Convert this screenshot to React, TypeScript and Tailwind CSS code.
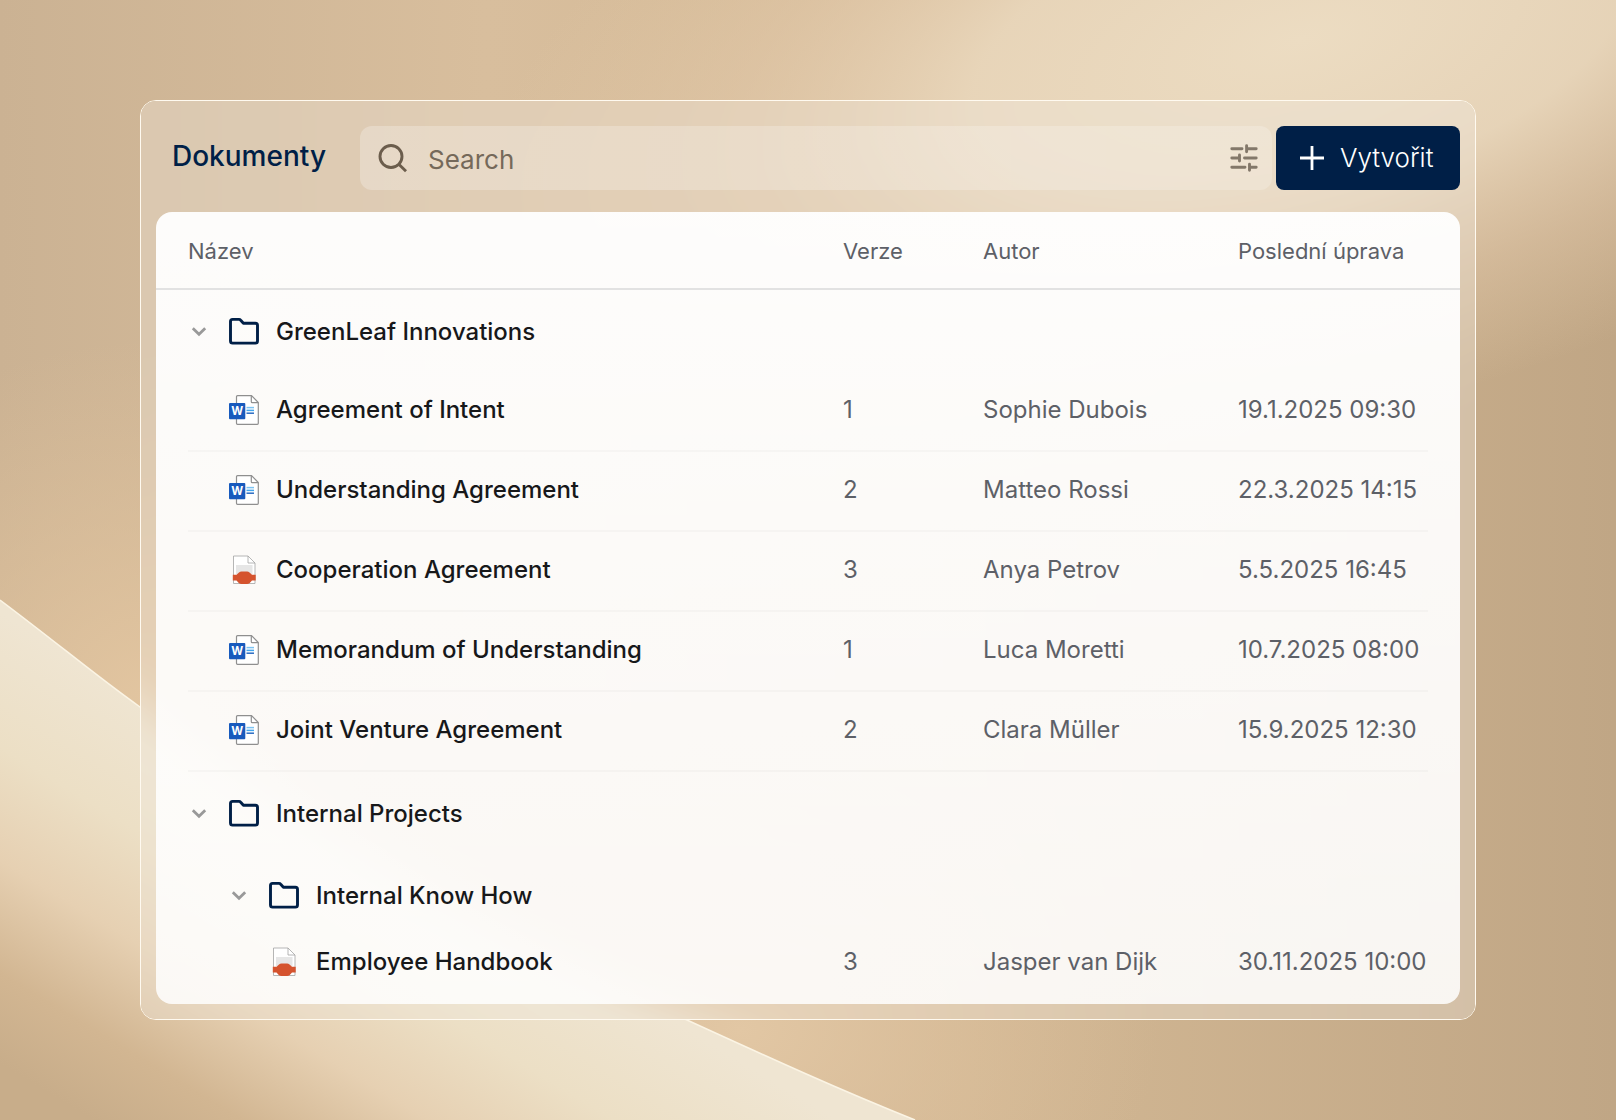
import { useState } from "react";

type FileKind = "word" | "pdf";

interface FileRow {
  name: string;
  kind: FileKind;
  version: number;
  author: string;
  modified: string;
}

const FILES: FileRow[] = [
  { name: "Agreement of Intent", kind: "word", version: 1, author: "Sophie Dubois", modified: "19.1.2025 09:30" },
  { name: "Understanding Agreement", kind: "word", version: 2, author: "Matteo Rossi", modified: "22.3.2025 14:15" },
  { name: "Cooperation Agreement", kind: "pdf", version: 3, author: "Anya Petrov", modified: "5.5.2025 16:45" },
  { name: "Memorandum of Understanding", kind: "word", version: 1, author: "Luca Moretti", modified: "10.7.2025 08:00" },
  { name: "Joint Venture Agreement", kind: "word", version: 2, author: "Clara Müller", modified: "15.9.2025 12:30" },
];

const HANDBOOK: FileRow = {
  name: "Employee Handbook",
  kind: "pdf",
  version: 3,
  author: "Jasper van Dijk",
  modified: "30.11.2025 10:00",
};

function Backdrop() {
  return (
    <svg
      className="w-full h-full"
      viewBox="0 0 1616 1120"
      preserveAspectRatio="none"
      aria-hidden="true"
    >
      <defs>
        <linearGradient id="base" x1="0" y1="0" x2="1616" y2="0" gradientUnits="userSpaceOnUse">
          <stop offset="0" stopColor="#cbb293" />
          <stop offset="0.3" stopColor="#d8be9d" />
          <stop offset="0.6" stopColor="#d3b894" />
          <stop offset="1" stopColor="#c0a685" />
        </linearGradient>
        <radialGradient id="glow" cx="0" cy="0" r="1" gradientUnits="userSpaceOnUse" gradientTransform="translate(1300 40) rotate(-14) scale(840 380)">
          <stop offset="0" stopColor="#ecdcc2" />
          <stop offset="0.4" stopColor="#ead8bd" stopOpacity="0.9" />
          <stop offset="0.7" stopColor="#e5ccae" stopOpacity="0.45" />
          <stop offset="1" stopColor="#e3caa8" stopOpacity="0" />
        </radialGradient>
        <radialGradient id="warm" cx="0" cy="0" r="1" gradientUnits="userSpaceOnUse" gradientTransform="translate(150 700) scale(380 360)">
          <stop offset="0" stopColor="#e2c5a0" />
          <stop offset="1" stopColor="#dfc29c" stopOpacity="0" />
        </radialGradient>
        <radialGradient id="warmBottom" cx="0" cy="0" r="1" gradientUnits="userSpaceOnUse" gradientTransform="translate(740 1030) scale(420 300)">
          <stop offset="0" stopColor="#e2c7a4" />
          <stop offset="1" stopColor="#dabd99" stopOpacity="0" />
        </radialGradient>
        <linearGradient id="sheet" x1="310" y1="800" x2="110" y2="1130" gradientUnits="userSpaceOnUse">
          <stop offset="0" stopColor="#efe5d2" />
          <stop offset="0.3" stopColor="#ecdfc5" />
          <stop offset="0.55" stopColor="#e6d0b2" />
          <stop offset="0.8" stopColor="#d2b692" />
          <stop offset="1" stopColor="#c8ad8a" />
        </linearGradient>
      </defs>
      <rect width="1616" height="1120" fill="url(#base)" />
      <rect width="1616" height="1120" fill="url(#glow)" />
      <rect width="1616" height="1120" fill="url(#warm)" />
      <rect width="1616" height="1120" fill="url(#warmBottom)" />
      <path d="M0 600 C60 645 95 675 140 707 C300 822 480 930 687 1020 C770 1058 840 1090 915 1120 H0 Z" fill="url(#sheet)" />
      <path d="M0 600 C60 645 95 675 140 707 C300 822 480 930 687 1020 C770 1058 840 1090 915 1120" fill="none" stroke="#fbf4e4" strokeWidth="1.5" />
    </svg>
  );
}

function WordIcon() {
  return (
    <svg className="w-[30px] h-[30px] shrink-0" viewBox="0 0 30 30" aria-hidden="true">
      <path d="M8.5 0.7H22.5L29.3 7.5V28.3a1 1 0 0 1-1 1H8.5a1 1 0 0 1-1-1V1.7a1 1 0 0 1 1-1Z" fill="#fff" stroke="#8f8f8f" strokeWidth="1.2" />
      <path d="M22.3 0.9V6.7a1 1 0 0 0 1 1H29.1" fill="none" stroke="#8f8f8f" strokeWidth="1.2" />
      <rect x="0" y="8" width="16.3" height="16.3" rx="1" fill="#185abd" />
      <path d="M17.5 12.6H25" stroke="#7cc4f4" strokeWidth="1.5" />
      <path d="M17.5 15.4H25" stroke="#41a5ee" strokeWidth="1.5" />
      <path d="M17.5 18.2H25" stroke="#2b6cc3" strokeWidth="1.5" />
      <text x="8.1" y="20.2" textAnchor="middle" fontFamily="Inter, sans-serif" fontSize="11.5" fontWeight="700" fill="#fff">W</text>
    </svg>
  );
}

function PdfIcon() {
  return (
    <svg className="w-[30px] h-[30px] shrink-0" viewBox="0 0 30 30" aria-hidden="true">
      <path d="M4.5 1H19L26 8V28.5H4.5Z" fill="#fff" stroke="#a3a3a3" strokeWidth="0.8" />
      <path d="M19 1V8H26" fill="none" stroke="#a3a3a3" strokeWidth="0.8" />
      <rect x="7" y="10" width="16.5" height="9" fill="#e6e6e6" />
      <path d="M3.8 19.8H7.5L10 17.4Q11 16.6 12.5 16.6H18Q19.5 16.6 20.5 17.4L23 19.8H26.7V25.6H23L20.5 28.2Q19.5 29 18 29H12.5Q11 29 10 28.2L7.5 25.6H3.8Z" fill="#d5532e" />
    </svg>
  );
}

function FolderIcon() {
  return (
    <svg className="w-[30px] h-[30px] shrink-0" viewBox="0 0 30 30" fill="none" stroke="#001f47" strokeWidth="2.9" strokeLinejoin="round" aria-hidden="true">
      <path d="M1.5 4.5a2.1 2.1 0 0 1 2.1-2.1H10a2.3 2.3 0 0 1 1.7 .8L14.4 6.2H26.4a2.1 2.1 0 0 1 2.1 2.1V24a2.1 2.1 0 0 1-2.1 2.1H3.6a2.1 2.1 0 0 1-2.1-2.1Z" />
    </svg>
  );
}

function Chevron({ open }: { open: boolean }) {
  return (
    <svg className={open ? "w-5 h-5" : "w-5 h-5 -rotate-90"} viewBox="0 0 20 20" fill="none" stroke="#999" strokeWidth="2.8" aria-hidden="true">
      <path d="M3.8 6.2L10 12.2L16.2 6.2" />
    </svg>
  );
}

function FileLine({ file, nested }: { file: FileRow; nested?: boolean }) {
  const cell = nested ? "h-[52px] flex items-center" : "h-20 pb-0.5 flex items-center border-b-2 border-black/[0.025]";
  return (
    <tr>
      <td className="p-0 pl-8">
        <div className={`${cell} gap-[17px] text-[#17181a] font-medium ${nested ? "pl-[81px]" : "pl-[41px]"}`}>
          {file.kind === "word" ? <WordIcon /> : <PdfIcon />}
          {file.name}
        </div>
      </td>
      <td className="p-0">
        <div className={cell}>{file.version}</div>
      </td>
      <td className="p-0">
        <div className={cell}>{file.author}</div>
      </td>
      <td className="p-0 pr-8">
        <div className={`${cell} whitespace-nowrap`}>{file.modified}</div>
      </td>
    </tr>
  );
}

interface FolderLineProps {
  name: string;
  ghost?: string;
  nested?: boolean;
  open: boolean;
  onToggle: () => void;
}

function FolderLine({ name, ghost, nested, open, onToggle }: FolderLineProps) {
  return (
    <tr>
      <td colSpan={4} className="p-0 px-8">
        <div className={`flex items-center h-[82px] pt-0.5 ${nested ? "pl-10" : ""}`}>
          <button
            type="button"
            onClick={onToggle}
            aria-expanded={open}
            className="flex items-center text-[#17181a] font-medium pl-px"
          >
            <Chevron open={open} />
            <span className="flex items-center gap-[17px] pl-5">
              <FolderIcon />
              {name}
            </span>
          </button>
          {ghost && <span className="pl-4 font-medium text-black/[0.018]">{ghost}</span>}
        </div>
      </td>
    </tr>
  );
}

export default function App() {
  const [query, setQuery] = useState("");
  const [openFolders, setOpenFolders] = useState({ greenleaf: true, projects: true, knowHow: true });

  const toggle = (key: keyof typeof openFolders) => {
    setOpenFolders((prev) => ({ ...prev, [key]: !prev[key] }));
  };

  return (
    <div className="relative min-h-screen px-[140px] py-[100px] font-['Inter',sans-serif]">
      <div className="absolute inset-0">
        <Backdrop />
      </div>

      <main className="relative rounded-2xl border border-[#fffaf0] px-[15px] pt-[25px] pb-[15px]">
        {/* Frosted glass: a blurred copy of the backdrop, lined up with the page */}
        <div className="absolute inset-0 overflow-hidden rounded-[15px]">
          <div className="absolute -inset-x-[141px] -inset-y-[101px] blur-xl">
            <Backdrop />
          </div>
          <div className="absolute inset-0 bg-[#f2eae2]/35" />
        </div>

        {/* Toolbar */}
        <header className="relative flex items-center pb-[22px]">
          <h1 className="pl-4 pr-[34px] pb-1 text-[28px] leading-9 font-medium text-[#001f47]">Dokumenty</h1>
          <div className="flex-1 flex items-center h-16 mr-1 pl-[18px] pr-3.5 rounded-xl bg-gradient-to-r from-white/25 to-white/20">
            <svg className="w-[30px] h-[30px] shrink-0" viewBox="0 0 30 30" fill="none" stroke="#6b5d4c" strokeWidth="2.9" aria-hidden="true">
              <circle cx="13" cy="13.5" r="11" />
              <path d="M20.8 21.3L28 28.3" />
            </svg>
            <input
              type="text"
              value={query}
              onChange={(e) => setQuery(e.target.value)}
              placeholder="Search"
              aria-label="Search"
              className="flex-1 min-w-0 px-5 pt-1 text-[26px] leading-9 text-[#6b5d4c] placeholder:text-[#75695a] bg-transparent outline-none"
            />
            <button type="button" aria-label="Filter">
              <svg className="w-7 h-7" viewBox="0 0 28 28" fill="none" stroke="#83786a" strokeWidth="2.9" strokeLinecap="round" aria-hidden="true">
                <path d="M1.8 4.8H12M16.6 1.8V7.8M17 4.8H26.2" />
                <path d="M1.8 14H9.5M9.5 11V17M14.5 14H26.2" />
                <path d="M1.8 23.2H15M19.5 20.2V26.2M19.5 23.2H26.2" />
              </svg>
            </button>
          </div>
          <button type="button" className="flex items-center gap-4 h-16 w-46 pl-6 rounded-lg bg-[#001f47] text-white text-[26px] leading-9 font-light">
            <svg className="w-6 h-6" viewBox="0 0 24 24" stroke="currentColor" strokeWidth="2.8" aria-hidden="true">
              <path d="M0 12H24M12 0V24" />
            </svg>
            Vytvořit
          </button>
        </header>

        {/* Documents */}
        <div className="relative rounded-2xl bg-gradient-to-b from-white/95 to-white/85 pb-4">
          <table className="w-full table-fixed border-collapse text-left text-2xl text-[#5d6067]">
            <colgroup>
              <col />
              <col className="w-[140px]" />
              <col className="w-[255px]" />
              <col className="w-[222px]" />
            </colgroup>
            <thead>
              <tr className="h-[77px] border-b-2 border-[#e2e2e2] text-[22px]">
                <th className="p-0 pt-1 pl-8 font-normal">Název</th>
                <th className="p-0 pt-1 font-normal">Verze</th>
                <th className="p-0 pt-1 font-normal">Autor</th>
                <th className="p-0 pt-1 font-normal">Poslední úprava</th>
              </tr>
            </thead>
            <tbody>
              <FolderLine name="GreenLeaf Innovations" open={openFolders.greenleaf} onToggle={() => toggle("greenleaf")} />
              {openFolders.greenleaf && FILES.map((file) => <FileLine key={file.name} file={file} />)}
              <FolderLine name="Internal Projects" open={openFolders.projects} onToggle={() => toggle("projects")} />
              {openFolders.projects && (
                <FolderLine
                  name="Internal Know How"
                  ghost="Internal Fundraising"
                  nested
                  open={openFolders.knowHow}
                  onToggle={() => toggle("knowHow")}
                />
              )}
              {openFolders.projects && openFolders.knowHow && <FileLine file={HANDBOOK} nested />}
            </tbody>
          </table>
        </div>
      </main>
    </div>
  );
}
